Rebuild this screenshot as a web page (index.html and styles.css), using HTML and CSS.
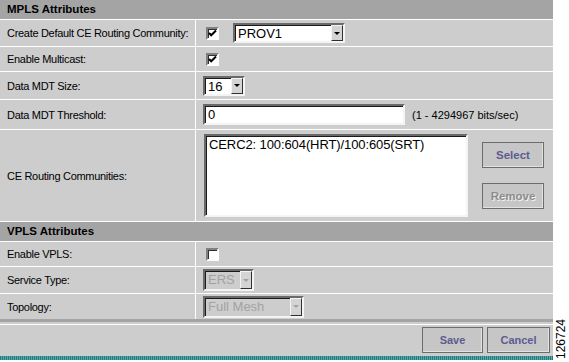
FILE: index.html
```html
<!DOCTYPE html>
<html lang="en">
  <head>
    <meta charset="UTF-8" />
    <title>MPLS / VPLS Attributes</title>
    <link rel="stylesheet" href="styles.css">
  </head>
  <body>
    <div class="panel">
      <div class="form">
        <div class="section-head">MPLS Attributes</div>

        <div class="row r1">
          <div class="label">Create Default CE Routing Community:</div>
          <div class="value">
            <span class="check">
              <svg width="9" height="9" viewBox="0 0 9 9"><polyline points="1,4 3.2,6.3 8,1.5" /></svg>
            </span>
            <div class="select prov">
              <span class="select-text">PROV1</span>
              <span class="arrow"><i></i></span>
            </div>
          </div>
        </div>

        <div class="row r2">
          <div class="label">Enable Multicast:</div>
          <div class="value">
            <span class="check">
              <svg width="9" height="9" viewBox="0 0 9 9"><polyline points="1,4 3.2,6.3 8,1.5" /></svg>
            </span>
          </div>
        </div>

        <div class="row r3">
          <div class="label">Data MDT Size:</div>
          <div class="value">
            <div class="select size">
              <span class="select-text">16</span>
              <span class="arrow"><i></i></span>
            </div>
          </div>
        </div>

        <div class="row r4">
          <div class="label">Data MDT Threshold:</div>
          <div class="value">
            <div class="field threshold">0</div>
            <span class="hint">(1 - 4294967 bits/sec)</span>
          </div>
        </div>

        <div class="row r5">
          <div class="label">CE Routing Communities:</div>
          <div class="value top">
            <div class="field listbox">CERC2: 100:604(HRT)/100:605(SRT)</div>
            <div class="side-buttons">
              <button class="btn">Select</button>
              <button class="btn disabled">Remove</button>
            </div>
          </div>
        </div>

        <div class="section-head">VPLS Attributes</div>

        <div class="row r6">
          <div class="label">Enable VPLS:</div>
          <div class="value">
            <span class="check"></span>
          </div>
        </div>

        <div class="row r7">
          <div class="label">Service Type:</div>
          <div class="value">
            <div class="select off ers">
              <span class="select-text">ERS</span>
              <span class="arrow"><i></i></span>
            </div>
          </div>
        </div>

        <div class="row r8">
          <div class="label">Topology:</div>
          <div class="value">
            <div class="select off mesh">
              <span class="select-text">Full Mesh</span>
              <span class="arrow"><i></i></span>
            </div>
          </div>
        </div>
      </div>

      <div class="footer">
        <div class="footer-bar">
          <button class="btn save">Save</button>
          <button class="btn cancel">Cancel</button>
        </div>
      </div>
      <div class="strip"></div>
    </div>

    <div class="fig-num">126724</div>
  </body>
</html>
```

FILE: styles.css
```css
* {
  margin: 0px;
  box-sizing: border-box;
}

body {
  background-color: white;
  font-family: "Liberation Sans", Arial, sans-serif;
  color: black;
}

.panel {
  width: 553px;
}

.form {
  display: flex;
  flex-direction: column;
  gap: 1px;
  background-color: white;
}

.section-head {
  height: 19px;
  padding: 3px 0px 0px 7px;
  background-color: #a4a4a4;
  font-weight: bold;
  font-size: 11.5px;
}

.row {
  display: grid;
  grid-template-columns: 195px 1fr;
  column-gap: 1px;
}

.r1 { height: 26px; }
.r2 { height: 24px; }
.r3 { height: 27px; }
.r4 { height: 29px; }
.r5 { height: 91px; }
.r6 { height: 24px; }
.r7 { height: 26px; }
.r8 { height: 25px; }

.label,
.value {
  background-color: #cdcdcd;
  display: flex;
  align-items: center;
}

.label {
  padding-left: 7px;
  font-size: 11px;
  letter-spacing: -0.3px;
}

.value {
  padding-left: 7px;
}

.value.top {
  align-items: flex-start;
  padding-top: 4px;
}

/* checkbox */
.check {
  width: 13px;
  height: 13px;
  margin-left: 3px;
  background-color: white;
  border: 2px solid;
  border-color: #808080 #ffffff #ffffff #808080;
  box-shadow: inset 1px 1px 0 #303030;
  display: flex;
  align-items: center;
  justify-content: center;
}

.check svg polyline {
  fill: none;
  stroke: black;
  stroke-width: 2;
}

/* dropdowns */
.select {
  height: 20px;
  display: flex;
  align-items: stretch;
  justify-content: space-between;
  background-color: white;
  border: 2px solid;
  border-color: #6a6a6a #f4f4f4 #f4f4f4 #6a6a6a;
  box-shadow: inset 1px 1px 0 #1a1a1a;
  font-size: 13px;
}

.select-text {
  padding: 1px 0px 0px 3px;
  line-height: 15px;
}

.arrow {
  width: 12px;
  background-color: #d4d4d4;
  border: 1px solid;
  border-color: #f4f4f4 #303030 #303030 #f4f4f4;
  display: flex;
  align-items: center;
  justify-content: center;
}

.arrow i {
  width: 0px;
  height: 0px;
  border-left: 3px solid transparent;
  border-right: 3px solid transparent;
  border-top: 3px solid black;
}

.prov {
  width: 112px;
  margin-left: 14px;
}

.size {
  width: 42px;
}

.off {
  background-color: #cdcdcd;
  color: #a2a2a2;
}

.off .arrow i {
  border-top-color: #a2a2a2;
}

.ers {
  width: 51px;
  height: 22px;
}

.mesh {
  width: 101px;
  height: 22px;
}

/* text fields */
.field {
  background-color: white;
  border: 2px solid;
  border-color: #6a6a6a #f4f4f4 #f4f4f4 #6a6a6a;
  box-shadow: inset 1px 1px 0 #1a1a1a;
  font-size: 13px;
}

.threshold {
  width: 202px;
  height: 21px;
  padding: 1px 0px 0px 3px;
  line-height: 15px;
}

.hint {
  margin-left: 7px;
  font-size: 11px;
}

.listbox {
  width: 264px;
  height: 83px;
  margin-left: 1px;
  padding: 1px 0px 0px 3px;
  letter-spacing: -0.1px;
}

.side-buttons {
  display: flex;
  flex-direction: column;
  gap: 15px;
  margin: 8px 0px 0px 14px;
}

/* buttons */
.btn {
  width: 62px;
  height: 26px;
  padding: 0px;
  background-color: #c6c6c6;
  border: 1px solid #6c6c6c;
  box-shadow: inset -1px -1px 0 #e2e2e2;
  font-family: "Liberation Sans", Arial, sans-serif;
  font-weight: bold;
  font-size: 11.5px;
  color: #5c5c90;
}

.btn.disabled {
  color: #8c8c8c;
  text-shadow: 1px 1px 0 #f2f2f2;
}

.footer {
  border-top: 3px solid #a4a4a4;
  padding-top: 2px;
  background-color: #cdcdcd;
}

.footer-bar {
  border-top: 1px solid white;
  padding: 2px 3px 3px 0px;
  display: flex;
  justify-content: flex-end;
  gap: 4px;
}

.save {
  width: 61px;
  font-size: 11px;
}

.cancel {
  width: 63px;
  font-size: 11px;
}

.strip {
  height: 4px;
  background: repeating-linear-gradient(90deg, #1f7d7d 0px 1px, #5aa8a8 1px 2px);
}

.fig-num {
  position: absolute;
  left: 556px;
  top: 319px;
  writing-mode: vertical-rl;
  transform: rotate(180deg);
  font-size: 12px;
  line-height: 11px;
}
```
